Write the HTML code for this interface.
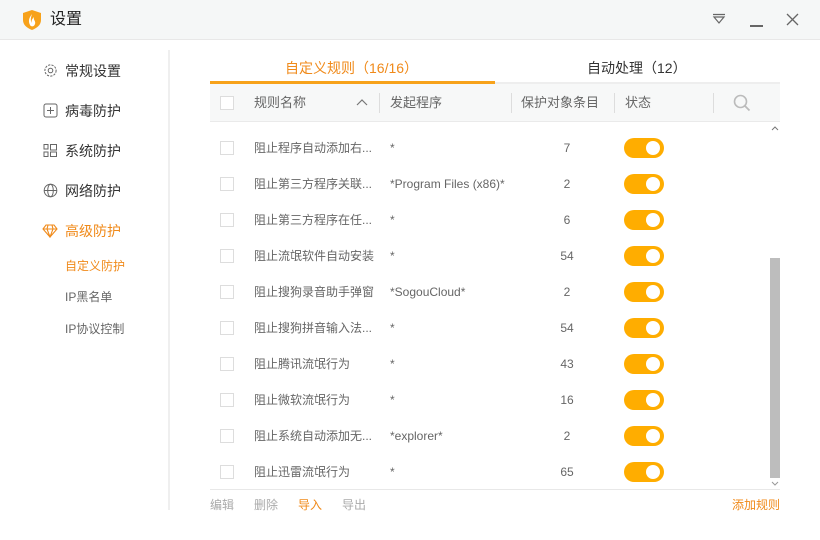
<!DOCTYPE html>
<html><head><meta charset="utf-8"><style>
*{margin:0;padding:0;box-sizing:border-box}
body{width:820px;height:540px;background:#fff;font-family:"Liberation Sans","Noto Sans CJK SC",sans-serif;position:relative;overflow:hidden;color:#333}
.a{position:absolute;white-space:nowrap;line-height:16px}
.tb{position:absolute;left:0;top:0;width:820px;height:40px;background:#f5f7f7;border-bottom:1px solid #e8e8e8}
.nav{font-size:14px;color:#333;line-height:18px}
.sub{font-size:12px;color:#666}
.cb{position:absolute;left:220px;width:14px;height:14px;border:1px solid #ddd;background:#fff}
.row{font-size:12px;color:#666}
.tg{position:absolute;left:624px;width:40px;height:20px;border-radius:10px;background:#ffad00}
.tg:after{content:"";position:absolute;right:4px;top:3px;width:14px;height:14px;border-radius:50%;background:#fff}
</style></head><body>
<div class="tb"></div>
<svg class="a" style="left:22px;top:9px" width="20" height="22" viewBox="0 0 20 22"><path d="M10 1 L19 4 V11 C19 16 15 19 10 21 C5 19 1 16 1 11 V4 Z" fill="#f7a21b"/><path d="M10 5 C7 9 6 12 8 16 C9 18 12 18 13 15 C14 12 11 11 12 8 C10 10 9 12 10 14 C8 12 9 8 10 5Z" fill="#fff"/></svg>
<div class="a" style="left:50px;top:10px;font-size:16px;line-height:20px;color:#222">设置</div>
<svg class="a" style="left:712px;top:13px" width="14" height="12"><path d="M1 1.5H13M2 4L7 10L12 4Z" stroke="#666" fill="none" stroke-width="1.2"/></svg>
<div class="a" style="left:750px;top:25px;width:13px;height:1.5px;background:#666"></div>
<svg class="a" style="left:786px;top:13px" width="13" height="13"><path d="M1 1L12 12M12 1L1 12" stroke="#666" stroke-width="1.3"/></svg>

<svg class="a" style="left:43px;top:63px" width="15" height="15" viewBox="0 0 15 15"><circle cx="7.5" cy="7.5" r="2.3" fill="none" stroke="#666"/><circle cx="7.5" cy="7.5" r="5.6" fill="none" stroke="#666" stroke-dasharray="2.2 1.2"/></svg>
<div class="a nav" style="left:65px;top:62px">常规设置</div>
<svg class="a" style="left:43px;top:103px" width="15" height="15"><rect x="1" y="1" width="13" height="13" rx="2" fill="none" stroke="#666"/><path d="M4 7.5H11M7.5 4V11" stroke="#666"/></svg>
<div class="a nav" style="left:65px;top:102px">病毒防护</div>
<svg class="a" style="left:43px;top:143px" width="15" height="15"><path d="M1 1.5H5V6H1ZM1 9H5V13.5H1ZM7.5 1.5H13.5V7H7.5ZM7.5 9H13.5V13.5H7.5Z" fill="none" stroke="#666"/></svg>
<div class="a nav" style="left:65px;top:142px">系统防护</div>
<svg class="a" style="left:43px;top:183px" width="15" height="15"><circle cx="7.5" cy="7.5" r="6.3" fill="none" stroke="#666"/><ellipse cx="7.5" cy="7.5" rx="2.8" ry="6.3" fill="none" stroke="#666"/><path d="M1.2 7.5H13.8" stroke="#666"/></svg>
<div class="a nav" style="left:65px;top:182px">网络防护</div>
<svg class="a" style="left:42px;top:224px" width="16" height="14"><path d="M4 1H12L15 5L8 13L1 5Z M1 5H15 M6 1L5 5L8 13L11 5L10 1" fill="none" stroke="#f08a1a" stroke-width="1.1"/></svg>
<div class="a nav" style="left:65px;top:222px;color:#f08a1a">高级防护</div>
<div class="a sub" style="left:65px;top:258px;color:#f08a1a">自定义防护</div>
<div class="a sub" style="left:65px;top:289px">IP黑名单</div>
<div class="a sub" style="left:65px;top:321px">IP协议控制</div>
<div class="a" style="left:168px;top:50px;width:2px;height:460px;background:#efefef"></div>

<div class="a" style="left:285px;top:60px;font-size:14px;color:#f08a1a">自定义规则（16/16）</div>
<div class="a" style="left:587px;top:60px;font-size:14px;color:#333">自动处理（12）</div>
<div class="a" style="left:210px;top:81px;width:285px;height:3px;background:#f7a21b"></div>
<div class="a" style="left:495px;top:82px;width:285px;height:2px;background:#eee"></div>
<div class="a" style="left:210px;top:84px;width:570px;height:38px;background:#f7f8f8;border-bottom:1px solid #eaeaea"></div>
<div class="cb" style="top:96px"></div>
<div class="a row" style="left:254px;top:95px;font-size:13px">规则名称</div>
<svg class="a" style="left:356px;top:98px" width="12" height="8"><path d="M1 7L6 2L11 7" fill="none" stroke="#777" stroke-width="1.2"/></svg>
<div class="a" style="left:379px;top:93px;width:1px;height:20px;background:#ddd"></div>
<div class="a row" style="left:390px;top:95px;font-size:13px">发起程序</div>
<div class="a" style="left:511px;top:93px;width:1px;height:20px;background:#ddd"></div>
<div class="a row" style="left:521px;top:95px;font-size:13px">保护对象条目</div>
<div class="a" style="left:614px;top:93px;width:1px;height:20px;background:#ddd"></div>
<div class="a row" style="left:625px;top:95px;font-size:13px">状态</div>
<div class="a" style="left:713px;top:93px;width:1px;height:20px;background:#ddd"></div>
<svg class="a" style="left:733px;top:94px" width="18" height="18"><circle cx="7.5" cy="7.5" r="6" fill="none" stroke="#bbb" stroke-width="1.6"/><path d="M12 12L16.5 16.5" stroke="#bbb" stroke-width="1.8"/></svg>

<svg class="a" style="left:771px;top:125px" width="8" height="6"><path d="M1 5L4 2L7 5" fill="none" stroke="#777"/></svg>
<div class="a" style="left:770px;top:258px;width:10px;height:220px;background:#bdbdbd"></div>
<svg class="a" style="left:771px;top:481px" width="8" height="6"><path d="M1 1L4 4L7 1" fill="none" stroke="#999"/></svg>

<div id="rows"></div>
<div class="a" style="left:210px;top:489px;width:570px;height:1px;background:#e8e8e8"></div>
<div class="a row" style="left:210px;top:497px;color:#aaa">编辑</div>
<div class="a row" style="left:254px;top:497px;color:#aaa">删除</div>
<div class="a row" style="left:298px;top:497px;color:#f08a1a">导入</div>
<div class="a row" style="left:342px;top:497px;color:#aaa">导出</div>
<div class="a row" style="left:732px;top:497px;color:#f08a1a">添加规则</div>
<script>
var d=[["阻止程序自动添加右...","*","7"],["阻止第三方程序关联...","*Program Files (x86)*","2"],["阻止第三方程序在任...","*","6"],["阻止流氓软件自动安装","*","54"],["阻止搜狗录音助手弹窗","*SogouCloud*","2"],["阻止搜狗拼音输入法...","*","54"],["阻止腾讯流氓行为","*","43"],["阻止微软流氓行为","*","16"],["阻止系统自动添加无...","*explorer*","2"],["阻止迅雷流氓行为","*","65"]];
var h="";d.forEach(function(r,i){var y=148+i*36;
h+='<div class="cb" style="top:'+(y-7)+'px"></div><div class="a row" style="left:254px;top:'+(y-8)+'px">'+r[0]+'</div><div class="a row" style="left:390px;top:'+(y-8)+'px">'+r[1]+'</div><div class="a row" style="left:537px;width:60px;text-align:center;top:'+(y-8)+'px">'+r[2]+'</div><div class="tg" style="top:'+(y-10)+'px"></div>';});
document.getElementById("rows").innerHTML=h;
</script>
</body></html>
